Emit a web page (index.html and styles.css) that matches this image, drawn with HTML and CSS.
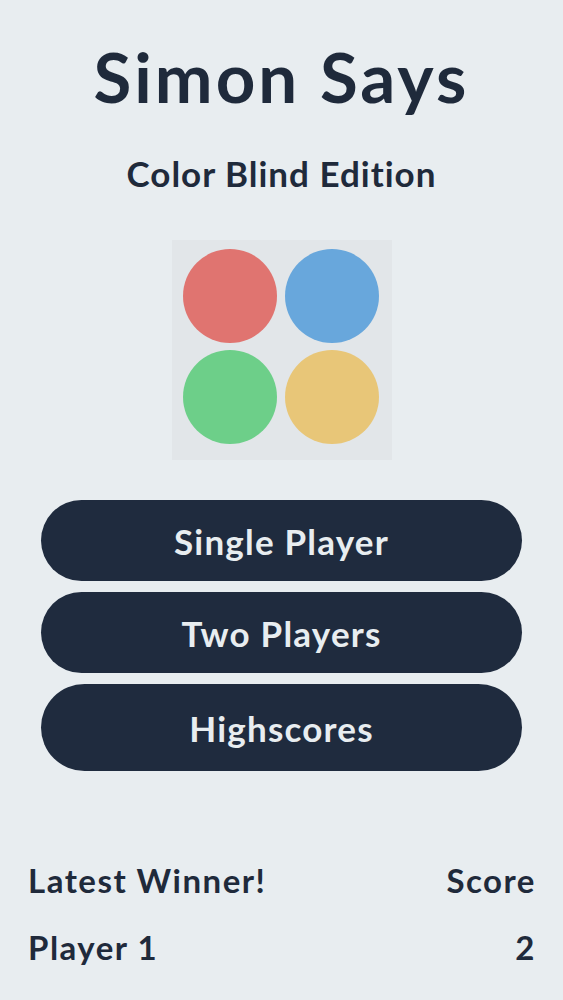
FILE: index.html
```html
<!DOCTYPE html>
<html lang="en">

<head>
    <meta charset="UTF-8">
    <meta name="viewport" content="width=device-width, initial-scale=1.0">
    <title>Simon Says</title>

    <link rel="stylesheet" href="styles.css">
</head>

<body>

    <main class="container">
        <h1 class="title">Simon Says</h1>
        <h2 class="subtitle">Color Blind Edition</h2>

        <div class="board">
            <span class="dot red"></span>
            <span class="dot blue"></span>
            <span class="dot green"></span>
            <span class="dot yellow"></span>
        </div>

        <div class="menu">
            <button class="menu-btn">Single Player</button>
            <button class="menu-btn">Two Players</button>
            <button class="menu-btn">Highscores</button>
        </div>

        <div class="winner">
            <div class="winner-row">
                <span>Latest Winner!</span>
                <span>Score</span>
            </div>
            <div class="winner-row">
                <span>Player 1</span>
                <span>2</span>
            </div>
        </div>
    </main>

</body>

</html>
```

FILE: styles.css
```css
* {
    margin: 0;
    padding: 0;
    box-sizing: border-box;
}

body {
    background-color: #e8edf0;
    color: #1f2a3b;
    font-family: Lato, "Open Sans", sans-serif;
    font-weight: 700;
}

.container {
    display: flex;
    flex-direction: column;
    align-items: center;
    height: 1000px;
}

.title {
    font-size: 69px;
    line-height: 83px;
    letter-spacing: 3px;
    margin-top: 35px;
    font-weight: 700;
}

.subtitle {
    font-size: 35px;
    line-height: 42px;
    letter-spacing: 1px;
    margin-top: 34px;
    font-weight: 700;
}

.board {
    display: grid;
    grid-template-columns: 94px 94px;
    gap: 7px 8px;
    padding: 9px 13px 16px 11px;
    margin-top: 46px;
    background-color: #e2e6e9;
}

.dot {
    width: 94px;
    height: 94px;
    border-radius: 50%;
}

.red {
    background-color: #e07470;
}

.blue {
    background-color: #68a7dc;
}

.green {
    background-color: #6dcf89;
}

.yellow {
    background-color: #e8c678;
}

.menu {
    display: flex;
    flex-direction: column;
    gap: 11px;
    width: 481px;
    margin-top: 40px;
}

.menu-btn {
    height: 81px;
    border: none;
    border-radius: 41px;
    background-color: #1f2b3e;
    color: #e8edf0;
    font-family: inherit;
    font-weight: 700;
    font-size: 35px;
    letter-spacing: 1.2px;
}

.menu-btn:last-child {
    height: 87px;
    border-radius: 44px;
}

.winner {
    width: 100%;
    padding: 0 27px 0 28px;
    margin-top: auto;
    margin-bottom: 33px;
    display: flex;
    flex-direction: column;
    gap: 27px;
}

.winner-row {
    display: flex;
    justify-content: space-between;
    font-size: 33px;
    line-height: 40px;
    letter-spacing: 1.5px;
}
```
